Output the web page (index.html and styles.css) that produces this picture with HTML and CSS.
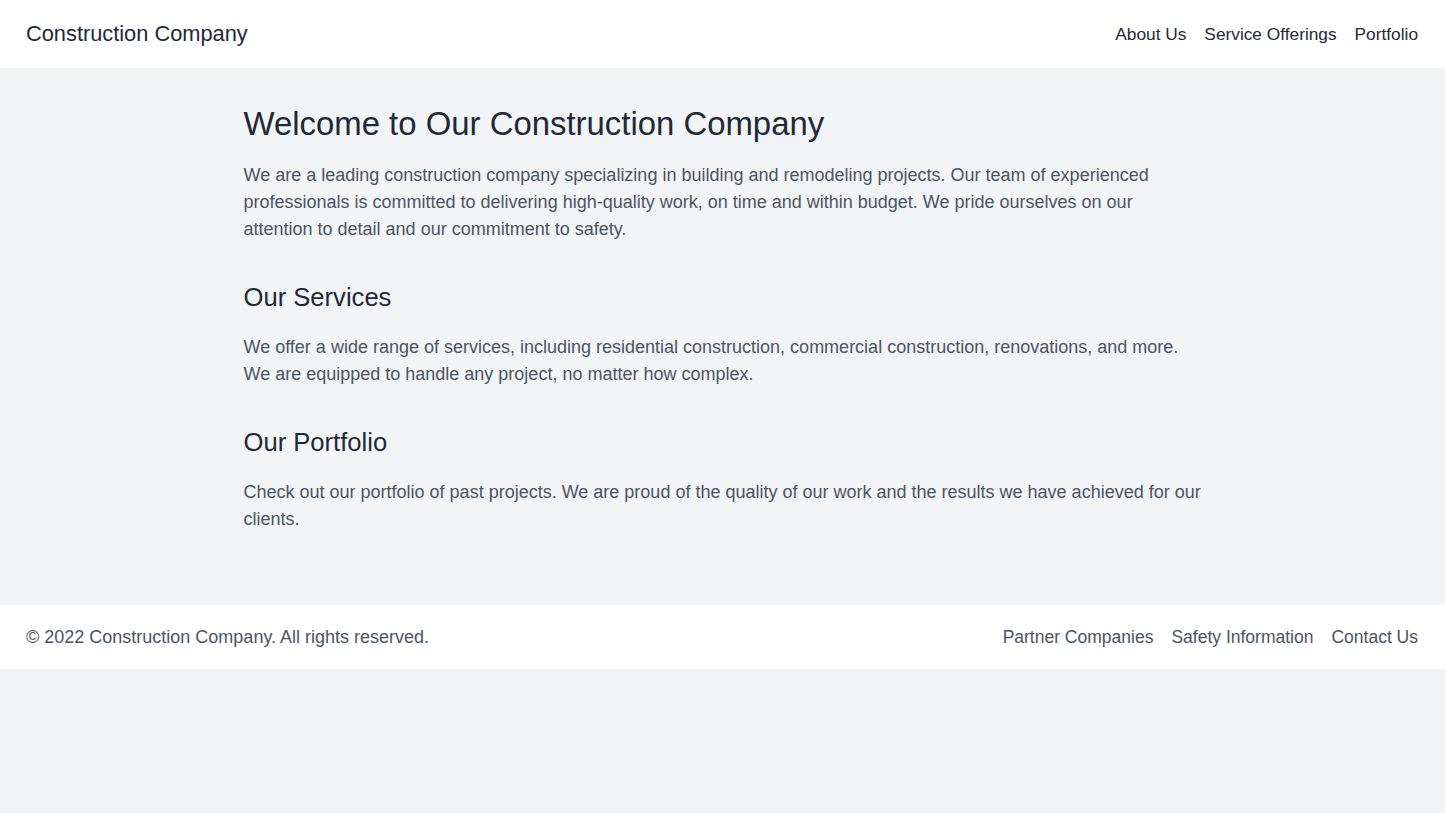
FILE: index.html
```html
<!DOCTYPE html>
<html>
	<head>
		<meta charset="UTF-8">
		<title>Construction Company</title>
	<link rel="stylesheet" href="styles.css">
	</head>
	<body>
		<header class="top">
			<div class="brand">Construction Company</div>
			<nav class="nav">
				<a href="#">About Us</a>
				<a href="#">Service Offerings</a>
				<a href="#">Portfolio</a>
			</nav>
		</header>
		<main class="main">
			<section class="block">
				<h1 class="title">Welcome to Our Construction Company</h1>
				<p class="text">We are a leading construction company specializing in building and remodeling projects. Our team of experienced professionals is committed to delivering high-quality work, on time and within budget. We pride ourselves on our attention to detail and our commitment to safety.</p>
			</section>
			<section class="block">
				<h2 class="sub">Our Services</h2>
				<p class="text">We offer a wide range of services, including residential construction, commercial construction, renovations, and more. We are equipped to handle any project, no matter how complex.</p>
			</section>
			<section class="block">
				<h2 class="sub">Our Portfolio</h2>
				<p class="text">Check out our portfolio of past projects. We are proud of the quality of our work and the results we have achieved for our clients.</p>
			</section>
		</main>
		<footer class="foot">
			<div class="copy">&copy; 2022 Construction Company. All rights reserved.</div>
			<nav class="links">
				<a href="#">Partner Companies</a>
				<a href="#">Safety Information</a>
				<a href="#">Contact Us</a>
			</nav>
		</footer>
	</body>
</html>
```

FILE: styles.css
```css
*{
	margin: 0;
	padding: 0;
	box-sizing: border-box;
}
body{
	background-color: #f3f4f6;
	font-family: "Liberation Sans", Arial, sans-serif;
	color: #1f2937;
}
a{
	color: inherit;
	text-decoration: none;
}
.top{
	display: flex;
	justify-content: space-between;
	align-items: center;
	height: 68px;
	background-color: #fff;
	padding: 0 27px 0 26px;
}
.brand{
	font-size: 21.8px;
	line-height: 28px;
}
.nav{
	display: flex;
	gap: 18px;
	font-size: 17.3px;
	line-height: 24px;
}
.main{
	max-width: 1024px;
	margin: 0 auto;
	padding: 38px 32px 34px 33px;
}
.block{
	margin-bottom: 38px;
}
.title{
	font-size: 32.9px;
	line-height: 36px;
	font-weight: 400;
	margin-bottom: 20px;
}
.sub{
	font-size: 25.6px;
	line-height: 32px;
	font-weight: 400;
	margin-bottom: 21px;
}
.text{
	font-size: 18px;
	line-height: 27px;
	color: #4b5563;
}
.foot{
	display: flex;
	justify-content: space-between;
	align-items: center;
	height: 64px;
	background-color: #fff;
	padding: 0 27px 0 26px;
	color: #4b5563;
	font-size: 17.5px;
	line-height: 24px;
}
.copy{
	font-size: 18px;
}
.links{
	display: flex;
	gap: 18px;
}
```
